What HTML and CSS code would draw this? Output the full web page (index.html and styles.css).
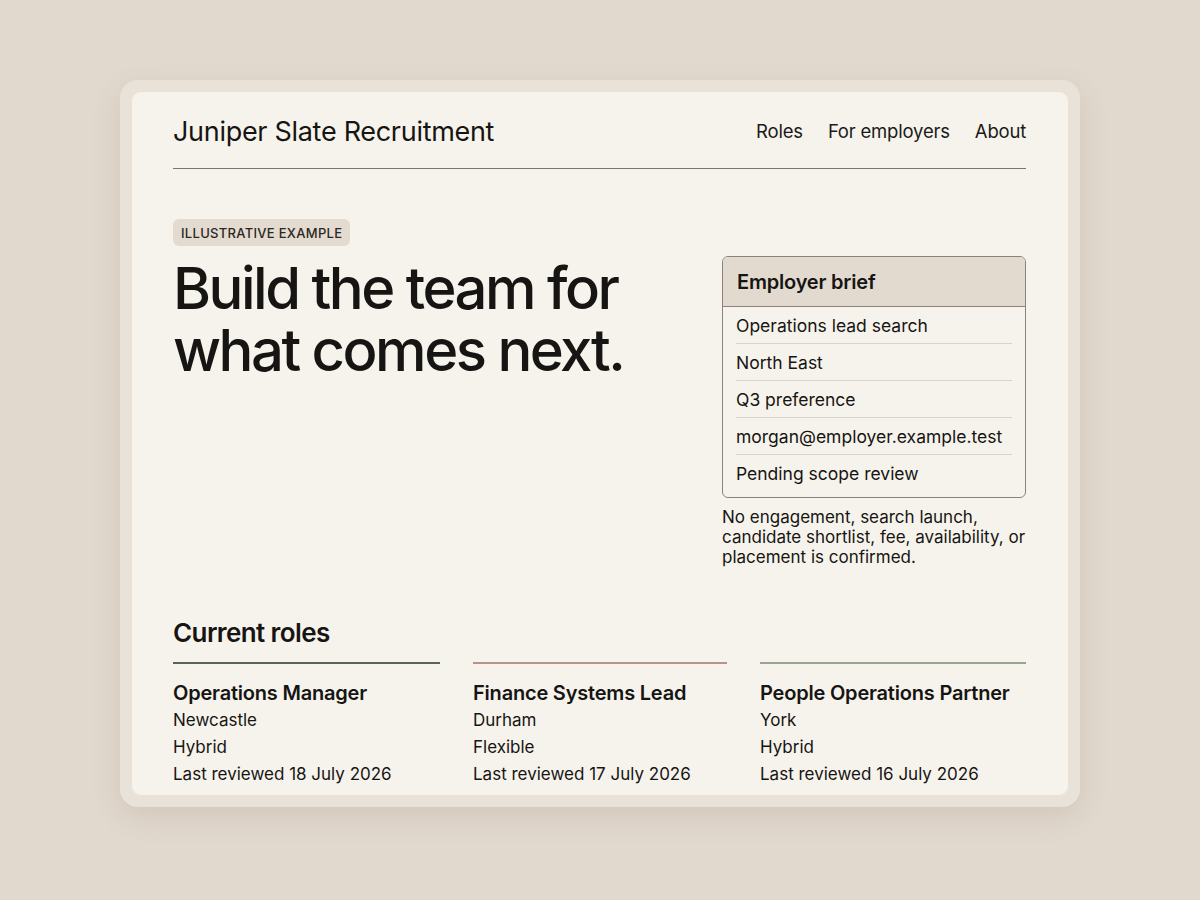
FILE: index.html
```html
<!DOCTYPE html>
<html lang="en">
<head>
  <meta charset="UTF-8">
  <title>Juniper Slate Recruitment</title>
  <meta name="viewport" content="width=device-width, initial-scale=1.0">
  <link rel="stylesheet" href="styles.css">
</head>
<body>
  <div class="frame">
    <div class="page">
      <header class="site-header">
        <div class="brand">Juniper Slate Recruitment</div>
        <nav class="nav">
          <a href="#">Roles</a>
          <a href="#">For employers</a>
          <a href="#">About</a>
        </nav>
      </header>

      <section class="hero">
        <div class="hero-main">
          <span class="badge">Illustrative example</span>
          <h1>Build the team for<br>what comes next.</h1>
        </div>
        <aside class="hero-side">
          <div class="brief">
            <div class="brief-head">Employer brief</div>
            <ul class="brief-list">
              <li>Operations lead search</li>
              <li>North East</li>
              <li>Q3 preference</li>
              <li>morgan@employer.example.test</li>
              <li>Pending scope review</li>
            </ul>
          </div>
          <p class="note">No engagement, search launch, candidate shortlist, fee, availability, or placement is confirmed.</p>
        </aside>
      </section>

      <section class="roles">
        <h2>Current roles</h2>
        <div class="role-grid">
          <div class="role role-forest">
            <h3>Operations Manager</h3>
            <p>Newcastle</p>
            <p>Hybrid</p>
            <p>Last reviewed 18 July 2026</p>
          </div>
          <div class="role role-clay">
            <h3>Finance Systems Lead</h3>
            <p>Durham</p>
            <p>Flexible</p>
            <p>Last reviewed 17 July 2026</p>
          </div>
          <div class="role role-sage">
            <h3>People Operations Partner</h3>
            <p>York</p>
            <p>Hybrid</p>
            <p>Last reviewed 16 July 2026</p>
          </div>
        </div>
      </section>
    </div>
  </div>
</body>
</html>
```

FILE: styles.css
```css
body {
  margin: 0;
  min-height: 100vh;
  background: #e2d9ce;
  font-family: Inter, 'Noto Sans', Arial, sans-serif;
  color: #161513;
  display: flex;
  justify-content: center;
  padding-top: 80px;
  box-sizing: border-box;
}
.frame {
  width: 960px;
  height: 727px;
  box-sizing: border-box;
  padding: 12px;
  background: #e9e2d9;
  border-radius: 18px;
  box-shadow: 0 10px 30px rgba(90,70,50,0.12);
}
.page {
  height: 100%;
  box-sizing: border-box;
  background: #f6f3ec;
  border-radius: 9px;
  padding: 0 42px 0 41px;
  overflow: hidden;
}
.site-header {
  display: flex;
  align-items: center;
  justify-content: space-between;
  height: 76px;
  border-bottom: 1px solid #7a756f;
}
.brand {
  font-size: 27px;
  letter-spacing: -0.3px;
  padding-top: 2px;
}
.nav {
  display: flex;
  gap: 25px;
  padding-top: 2px;
}
.nav a {
  color: #1b1a18;
  text-decoration: none;
  font-size: 18.5px;
  letter-spacing: -0.2px;
}
.hero {
  display: flex;
  justify-content: space-between;
  padding-top: 50px;
}
.badge {
  display: inline-block;
  background: #e4dbd0;
  color: #2b2824;
  font-size: 13px;
  font-weight: 500;
  text-transform: uppercase;
  letter-spacing: 0.3px;
  padding: 6px 8px 5px;
  border-radius: 6px;
}
h1 {
  margin: 11px 0 0;
  font-size: 58px;
  font-weight: 540;
  letter-spacing: -2.5px;
  line-height: 62px;
}
.hero-side {
  width: 304px;
  padding-top: 37px;
}
.brief {
  border: 1px solid #8a837b;
  border-radius: 6px;
  overflow: hidden;
}
.brief-head {
  background: #e3dacf;
  border-bottom: 1px solid #8a837b;
  padding: 13px 14px 12px;
  font-size: 20px;
  font-weight: 600;
  letter-spacing: -0.2px;
}
.brief-list {
  list-style: none;
  margin: 0;
  padding: 0 13px 6px;
}
.brief-list li {
  font-size: 17.5px;
  padding: 8px 0 7px;
  border-bottom: 1px solid #d9d3cb;
}
.brief-list li:last-child {
  border-bottom: none;
}
.note {
  margin: 9px 0 0;
  font-size: 17px;
  line-height: 20px;
}
.roles {
  padding-top: 50px;
}
.roles h2 {
  margin: 0 0 14px;
  font-size: 26px;
  font-weight: 560;
  letter-spacing: -0.6px;
}
.role-grid {
  display: grid;
  grid-template-columns: 267px 254px 266px;
  justify-content: space-between;
}
.role {
  border-top: 2px solid;
  padding-top: 17px;
}
.role-forest { border-color: #56665a; }
.role-clay { border-color: #b39686; }
.role-sage { border-color: #99a390; }
.role h3 {
  margin: 0 0 2px;
  font-size: 20px;
  font-weight: 600;
  letter-spacing: -0.2px;
}
.role p {
  margin: 0;
  font-size: 17px;
  line-height: 27px;
}
```
